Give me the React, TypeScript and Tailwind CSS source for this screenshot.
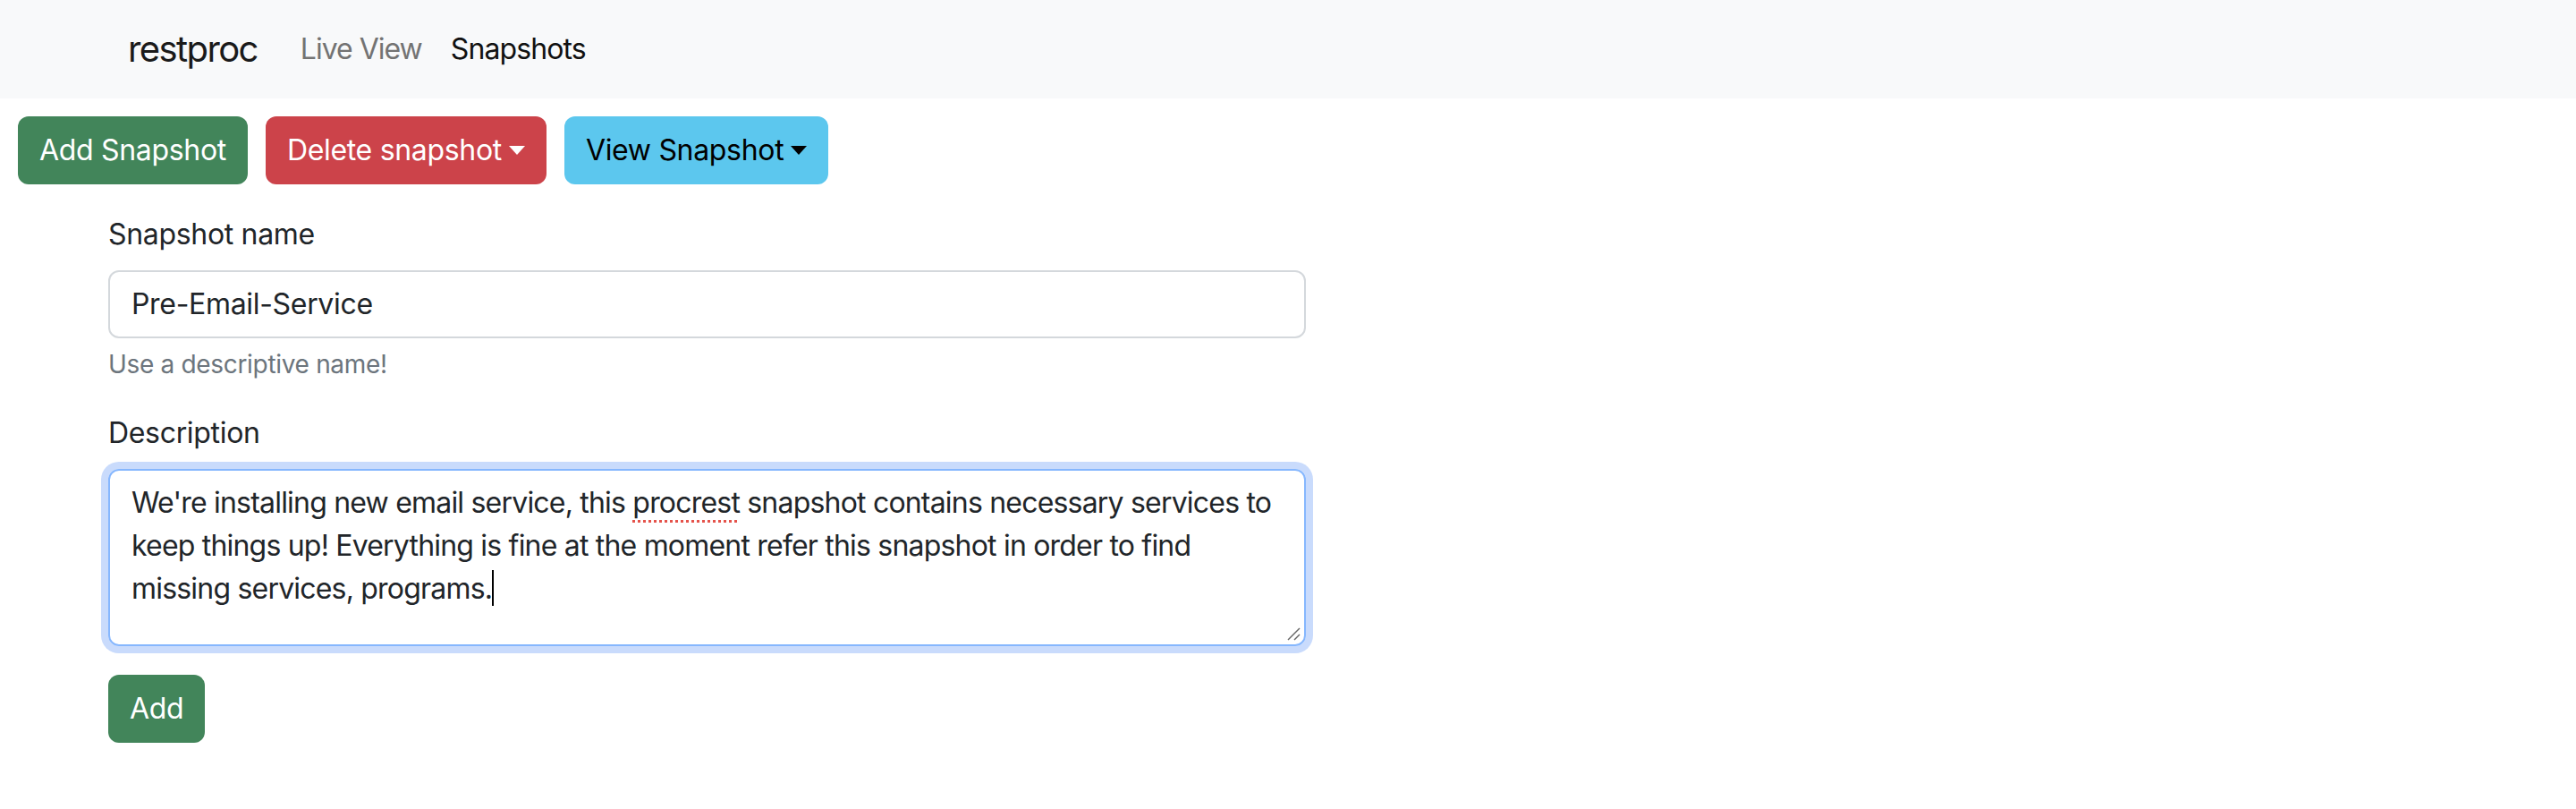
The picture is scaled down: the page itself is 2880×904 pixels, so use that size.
import { useState } from 'react';

function Caret() {
  return (
    <span className="inline-block w-[9.6px] h-0 ml-[8px] align-[6px] border-t-[10px] border-t-current border-x-[9.6px] border-x-transparent" />
  );
}

export default function App() {
  const [name] = useState('Pre-Email-Service');

  return (
    <div className="min-h-screen bg-white font-['Inter','Liberation_Sans',sans-serif] tracking-[-0.02em] text-[#212529]">
      {/* Navbar */}
      <nav className="h-[110px] bg-[#f8f9fa] flex items-center pl-[143px]">
        <span className="text-[40px] leading-[60px] text-[#1a1a1a] mr-[32px] tracking-[-1.6px]">restproc</span>
        <a className="text-[32px] leading-[48px] px-[16px] text-[#737373] tracking-[-1px]">Live View</a>
        <a className="text-[32px] leading-[48px] px-[16px] text-[#111] tracking-[-0.9px]">Snapshots</a>
      </nav>

      {/* Actions */}
      <div className="flex gap-[20px] px-[20px] mt-[20px]">
        <button className="h-[76px] px-[24px] rounded-[12px] bg-[#42855a] text-white text-[32px]">Add Snapshot</button>
        <button className="h-[76px] px-[24px] rounded-[12px] bg-[#cc434a] text-white text-[32px] flex items-center">
          Delete snapshot
          <Caret />
        </button>
        <button className="h-[76px] px-[24px] rounded-[12px] bg-[#5cc7ee] text-black text-[32px] flex items-center">
          View Snapshot
          <Caret />
        </button>
      </div>

      {/* Form */}
      <form className="pl-[121px] w-[1460px] mt-[32px]">
        <div className="mb-[32px]">
          <label className="block text-[32px] leading-[48px] mb-[16px]">Snapshot name</label>
          <div className="h-[76px] border-2 border-[#d4d8dc] rounded-[12px] px-[24px] flex items-center text-[32px]">
            {name}
          </div>
          <div className="mt-[8px] text-[28px] leading-[42px] text-[#6c757d]">Use a descriptive name!</div>
        </div>

        <div className="mb-[32px]">
          <label className="block text-[32px] leading-[48px] mb-[16px]">Description</label>
          <div className="relative h-[198px] border-2 border-[#86b7fe] rounded-[12px] shadow-[0_0_0_8px_#c9dbfc] px-[24px] py-[12px] text-[32px] leading-[48px] tracking-[-0.8px]">
            <span className="block whitespace-nowrap">
              We're installing new email service, this{' '}
              <span className="underline decoration-dotted decoration-[#e5534b] decoration-[3px] underline-offset-[8px]">procrest</span>{' '}
              snapshot contains necessary services to
            </span>
            <span className="block whitespace-nowrap">
              keep things up! Everything is fine at the moment refer this snapshot in order to find
            </span>
            <span className="block whitespace-nowrap">
              missing services, programs.
              <span className="inline-block w-[2px] h-[40px] bg-black align-[-8px]" />
            </span>
            <svg className="absolute right-[4px] bottom-[4px]" width="16" height="16" viewBox="0 0 16 16">
              <line x1="2" y1="15" x2="15" y2="2" stroke="#666" strokeWidth="1.5" />
              <line x1="9" y1="15" x2="15" y2="9" stroke="#666" strokeWidth="1.5" />
            </svg>
          </div>
        </div>

        <button type="button" className="h-[76px] px-[24px] rounded-[12px] bg-[#42855a] text-white text-[32px]">Add</button>
      </form>
    </div>
  );
}
